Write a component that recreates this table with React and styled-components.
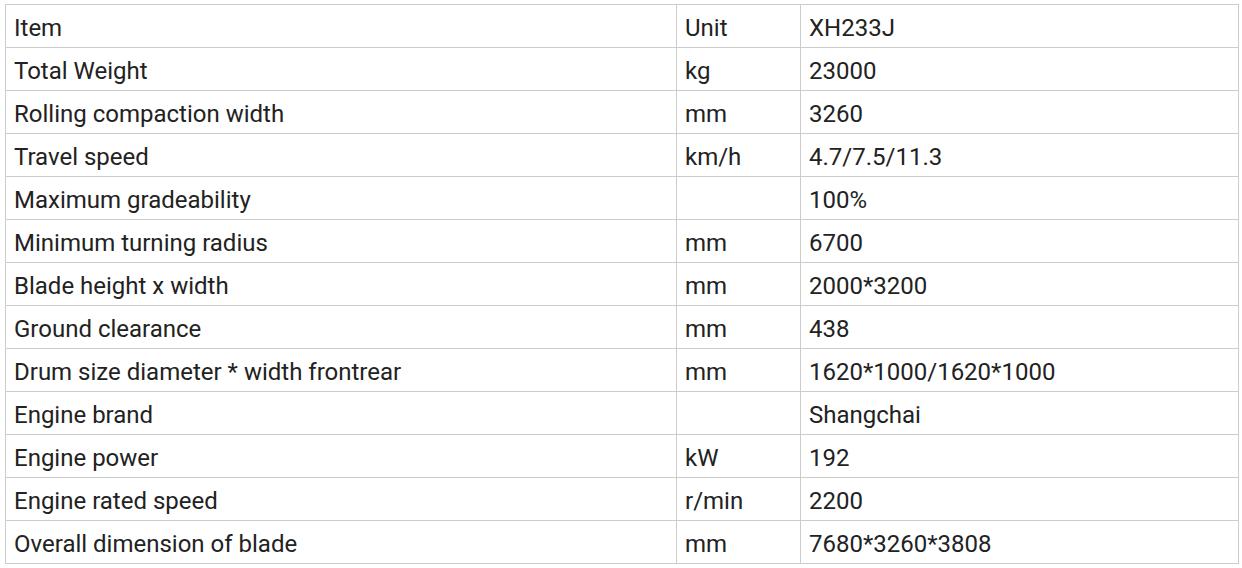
import styled, { createGlobalStyle } from "styled-components";

const GlobalStyle = createGlobalStyle`
    body {
        margin: 0;
        background: #ffffff;
        font-family: Roboto, "Liberation Sans", sans-serif;
    }
`

const Wrapper = styled.div`
    padding: 4px 4px 0 5px;
`

const SpecTable = styled.table`
    width: 1233px;
    border-collapse: collapse;
    table-layout: fixed;
    color: #222222;
    font-size: 24px;
`

const Column = styled.col`
    width: ${props => props.$width}px;
`

const Cell = styled.td`
    height: 43px;
    padding: 3px 8px 0 8px;
    border: 1px solid #cccccc;
    vertical-align: middle;
    white-space: nowrap;
    box-sizing: border-box;
    line-height: 28px;
`

const rows = [
    ["Item", "Unit", "XH233J"],
    ["Total Weight", "kg", "23000"],
    ["Rolling compaction width", "mm", "3260"],
    ["Travel speed", "km/h", "4.7/7.5/11.3"],
    ["Maximum gradeability", "", "100%"],
    ["Minimum turning radius", "mm", "6700"],
    ["Blade height x width", "mm", "2000*3200"],
    ["Ground clearance", "mm", "438"],
    ["Drum size diameter * width frontrear", "mm", "1620*1000/1620*1000"],
    ["Engine brand", "", "Shangchai"],
    ["Engine power", "kW", "192"],
    ["Engine rated speed", "r/min", "2200"],
    ["Overall dimension of blade", "mm", "7680*3260*3808"],
];

export default function App() {
    return (
        <>
            <GlobalStyle />
            <Wrapper>
                <SpecTable>
                    <colgroup>
                        <Column $width={671} />
                        <Column $width={124} />
                        <Column $width={438} />
                    </colgroup>
                    <tbody>
                        {rows.map(row => (
                            <tr key={row[0]}>
                                <Cell>{row[0]}</Cell>
                                <Cell>{row[1]}</Cell>
                                <Cell>{row[2]}</Cell>
                            </tr>
                        ))}
                    </tbody>
                </SpecTable>
            </Wrapper>
        </>
    );
}
